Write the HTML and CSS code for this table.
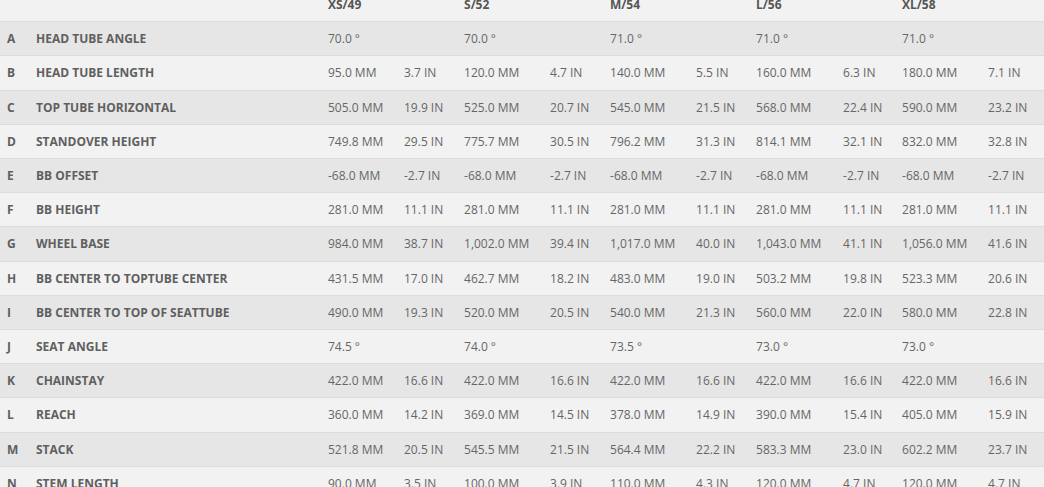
FILE: index.html
```html
<!DOCTYPE html>
<html>
<head>
<meta charset="utf-8">
<link rel="stylesheet" href="styles.css">
</head>
<body>
<table class="geo">
<colgroup>
<col class="c-letter"><col class="c-label">
<col class="c-mm1"><col class="c-in"><col class="c-mm"><col class="c-in"><col class="c-mm"><col class="c-in"><col class="c-mm7"><col class="c-in8"><col class="c-mm"><col class="c-last">
</colgroup>
<thead>
<tr><th></th><th></th><th colspan="2">XS/49</th><th colspan="2">S/52</th><th colspan="2">M/54</th><th colspan="2">L/56</th><th colspan="2">XL/58</th></tr>
</thead>
<tbody>
<tr><td class="key">A</td><td class="key">HEAD TUBE ANGLE</td><td>70.0 °</td><td></td><td>70.0 °</td><td></td><td>71.0 °</td><td></td><td>71.0 °</td><td></td><td>71.0 °</td><td></td></tr>
<tr><td class="key">B</td><td class="key">HEAD TUBE LENGTH</td><td>95.0 MM</td><td>3.7 IN</td><td>120.0 MM</td><td>4.7 IN</td><td>140.0 MM</td><td>5.5 IN</td><td>160.0 MM</td><td>6.3 IN</td><td>180.0 MM</td><td>7.1 IN</td></tr>
<tr><td class="key">C</td><td class="key">TOP TUBE HORIZONTAL</td><td>505.0 MM</td><td>19.9 IN</td><td>525.0 MM</td><td>20.7 IN</td><td>545.0 MM</td><td>21.5 IN</td><td>568.0 MM</td><td>22.4 IN</td><td>590.0 MM</td><td>23.2 IN</td></tr>
<tr><td class="key">D</td><td class="key">STANDOVER HEIGHT</td><td>749.8 MM</td><td>29.5 IN</td><td>775.7 MM</td><td>30.5 IN</td><td>796.2 MM</td><td>31.3 IN</td><td>814.1 MM</td><td>32.1 IN</td><td>832.0 MM</td><td>32.8 IN</td></tr>
<tr><td class="key">E</td><td class="key">BB OFFSET</td><td>-68.0 MM</td><td>-2.7 IN</td><td>-68.0 MM</td><td>-2.7 IN</td><td>-68.0 MM</td><td>-2.7 IN</td><td>-68.0 MM</td><td>-2.7 IN</td><td>-68.0 MM</td><td>-2.7 IN</td></tr>
<tr><td class="key">F</td><td class="key">BB HEIGHT</td><td>281.0 MM</td><td>11.1 IN</td><td>281.0 MM</td><td>11.1 IN</td><td>281.0 MM</td><td>11.1 IN</td><td>281.0 MM</td><td>11.1 IN</td><td>281.0 MM</td><td>11.1 IN</td></tr>
<tr><td class="key">G</td><td class="key">WHEEL BASE</td><td>984.0 MM</td><td>38.7 IN</td><td>1,002.0 MM</td><td>39.4 IN</td><td>1,017.0 MM</td><td>40.0 IN</td><td>1,043.0 MM</td><td>41.1 IN</td><td>1,056.0 MM</td><td>41.6 IN</td></tr>
<tr><td class="key">H</td><td class="key">BB CENTER TO TOPTUBE CENTER</td><td>431.5 MM</td><td>17.0 IN</td><td>462.7 MM</td><td>18.2 IN</td><td>483.0 MM</td><td>19.0 IN</td><td>503.2 MM</td><td>19.8 IN</td><td>523.3 MM</td><td>20.6 IN</td></tr>
<tr><td class="key">I</td><td class="key">BB CENTER TO TOP OF SEATTUBE</td><td>490.0 MM</td><td>19.3 IN</td><td>520.0 MM</td><td>20.5 IN</td><td>540.0 MM</td><td>21.3 IN</td><td>560.0 MM</td><td>22.0 IN</td><td>580.0 MM</td><td>22.8 IN</td></tr>
<tr><td class="key">J</td><td class="key">SEAT ANGLE</td><td>74.5 °</td><td></td><td>74.0 °</td><td></td><td>73.5 °</td><td></td><td>73.0 °</td><td></td><td>73.0 °</td><td></td></tr>
<tr><td class="key">K</td><td class="key">CHAINSTAY</td><td>422.0 MM</td><td>16.6 IN</td><td>422.0 MM</td><td>16.6 IN</td><td>422.0 MM</td><td>16.6 IN</td><td>422.0 MM</td><td>16.6 IN</td><td>422.0 MM</td><td>16.6 IN</td></tr>
<tr><td class="key">L</td><td class="key">REACH</td><td>360.0 MM</td><td>14.2 IN</td><td>369.0 MM</td><td>14.5 IN</td><td>378.0 MM</td><td>14.9 IN</td><td>390.0 MM</td><td>15.4 IN</td><td>405.0 MM</td><td>15.9 IN</td></tr>
<tr><td class="key">M</td><td class="key">STACK</td><td>521.8 MM</td><td>20.5 IN</td><td>545.5 MM</td><td>21.5 IN</td><td>564.4 MM</td><td>22.2 IN</td><td>583.3 MM</td><td>23.0 IN</td><td>602.2 MM</td><td>23.7 IN</td></tr>
<tr><td class="key">N</td><td class="key">STEM LENGTH</td><td>90.0 MM</td><td>3.5 IN</td><td>100.0 MM</td><td>3.9 IN</td><td>110.0 MM</td><td>4.3 IN</td><td>120.0 MM</td><td>4.7 IN</td><td>120.0 MM</td><td>4.7 IN</td></tr>
</tbody>
</table>
</body>
</html>
```
FILE: styles.css
```css
html, body {
  margin: 0;
  padding: 0;
  background: #f2f2f2;
  overflow: hidden;
}
body {
  font-family: "Open Sans", "Liberation Sans", sans-serif;
  font-size: 12px;
  color: #666;
}
.geo {
  width: 1044px;
  table-layout: fixed;
  border-collapse: collapse;
  margin-top: -12px;
}
.c-letter { width: 29px; }
.c-label { width: 292px; }
.c-mm1 { width: 76px; }
.c-in { width: 60px; }
.c-mm { width: 86px; }
.c-mm7 { width: 87px; }
.c-in8 { width: 59px; }
.c-last { width: 63px; }
.geo th, .geo td {
  padding: 8px 0 8px 7px;
  line-height: 17.2px;
  text-align: left;
  white-space: nowrap;
  vertical-align: middle;
}
.geo th {
  font-weight: 700;
  color: #555;
}
.geo td {
  border-top: 1px solid #dcdcdc;
}
.geo td.key {
  font-weight: 700;
  color: #5f5f5f;
}
.geo tbody tr:nth-child(odd) { background: #e6e6e6; }
.geo tbody tr:nth-child(even) { background: #f2f2f2; }
```
